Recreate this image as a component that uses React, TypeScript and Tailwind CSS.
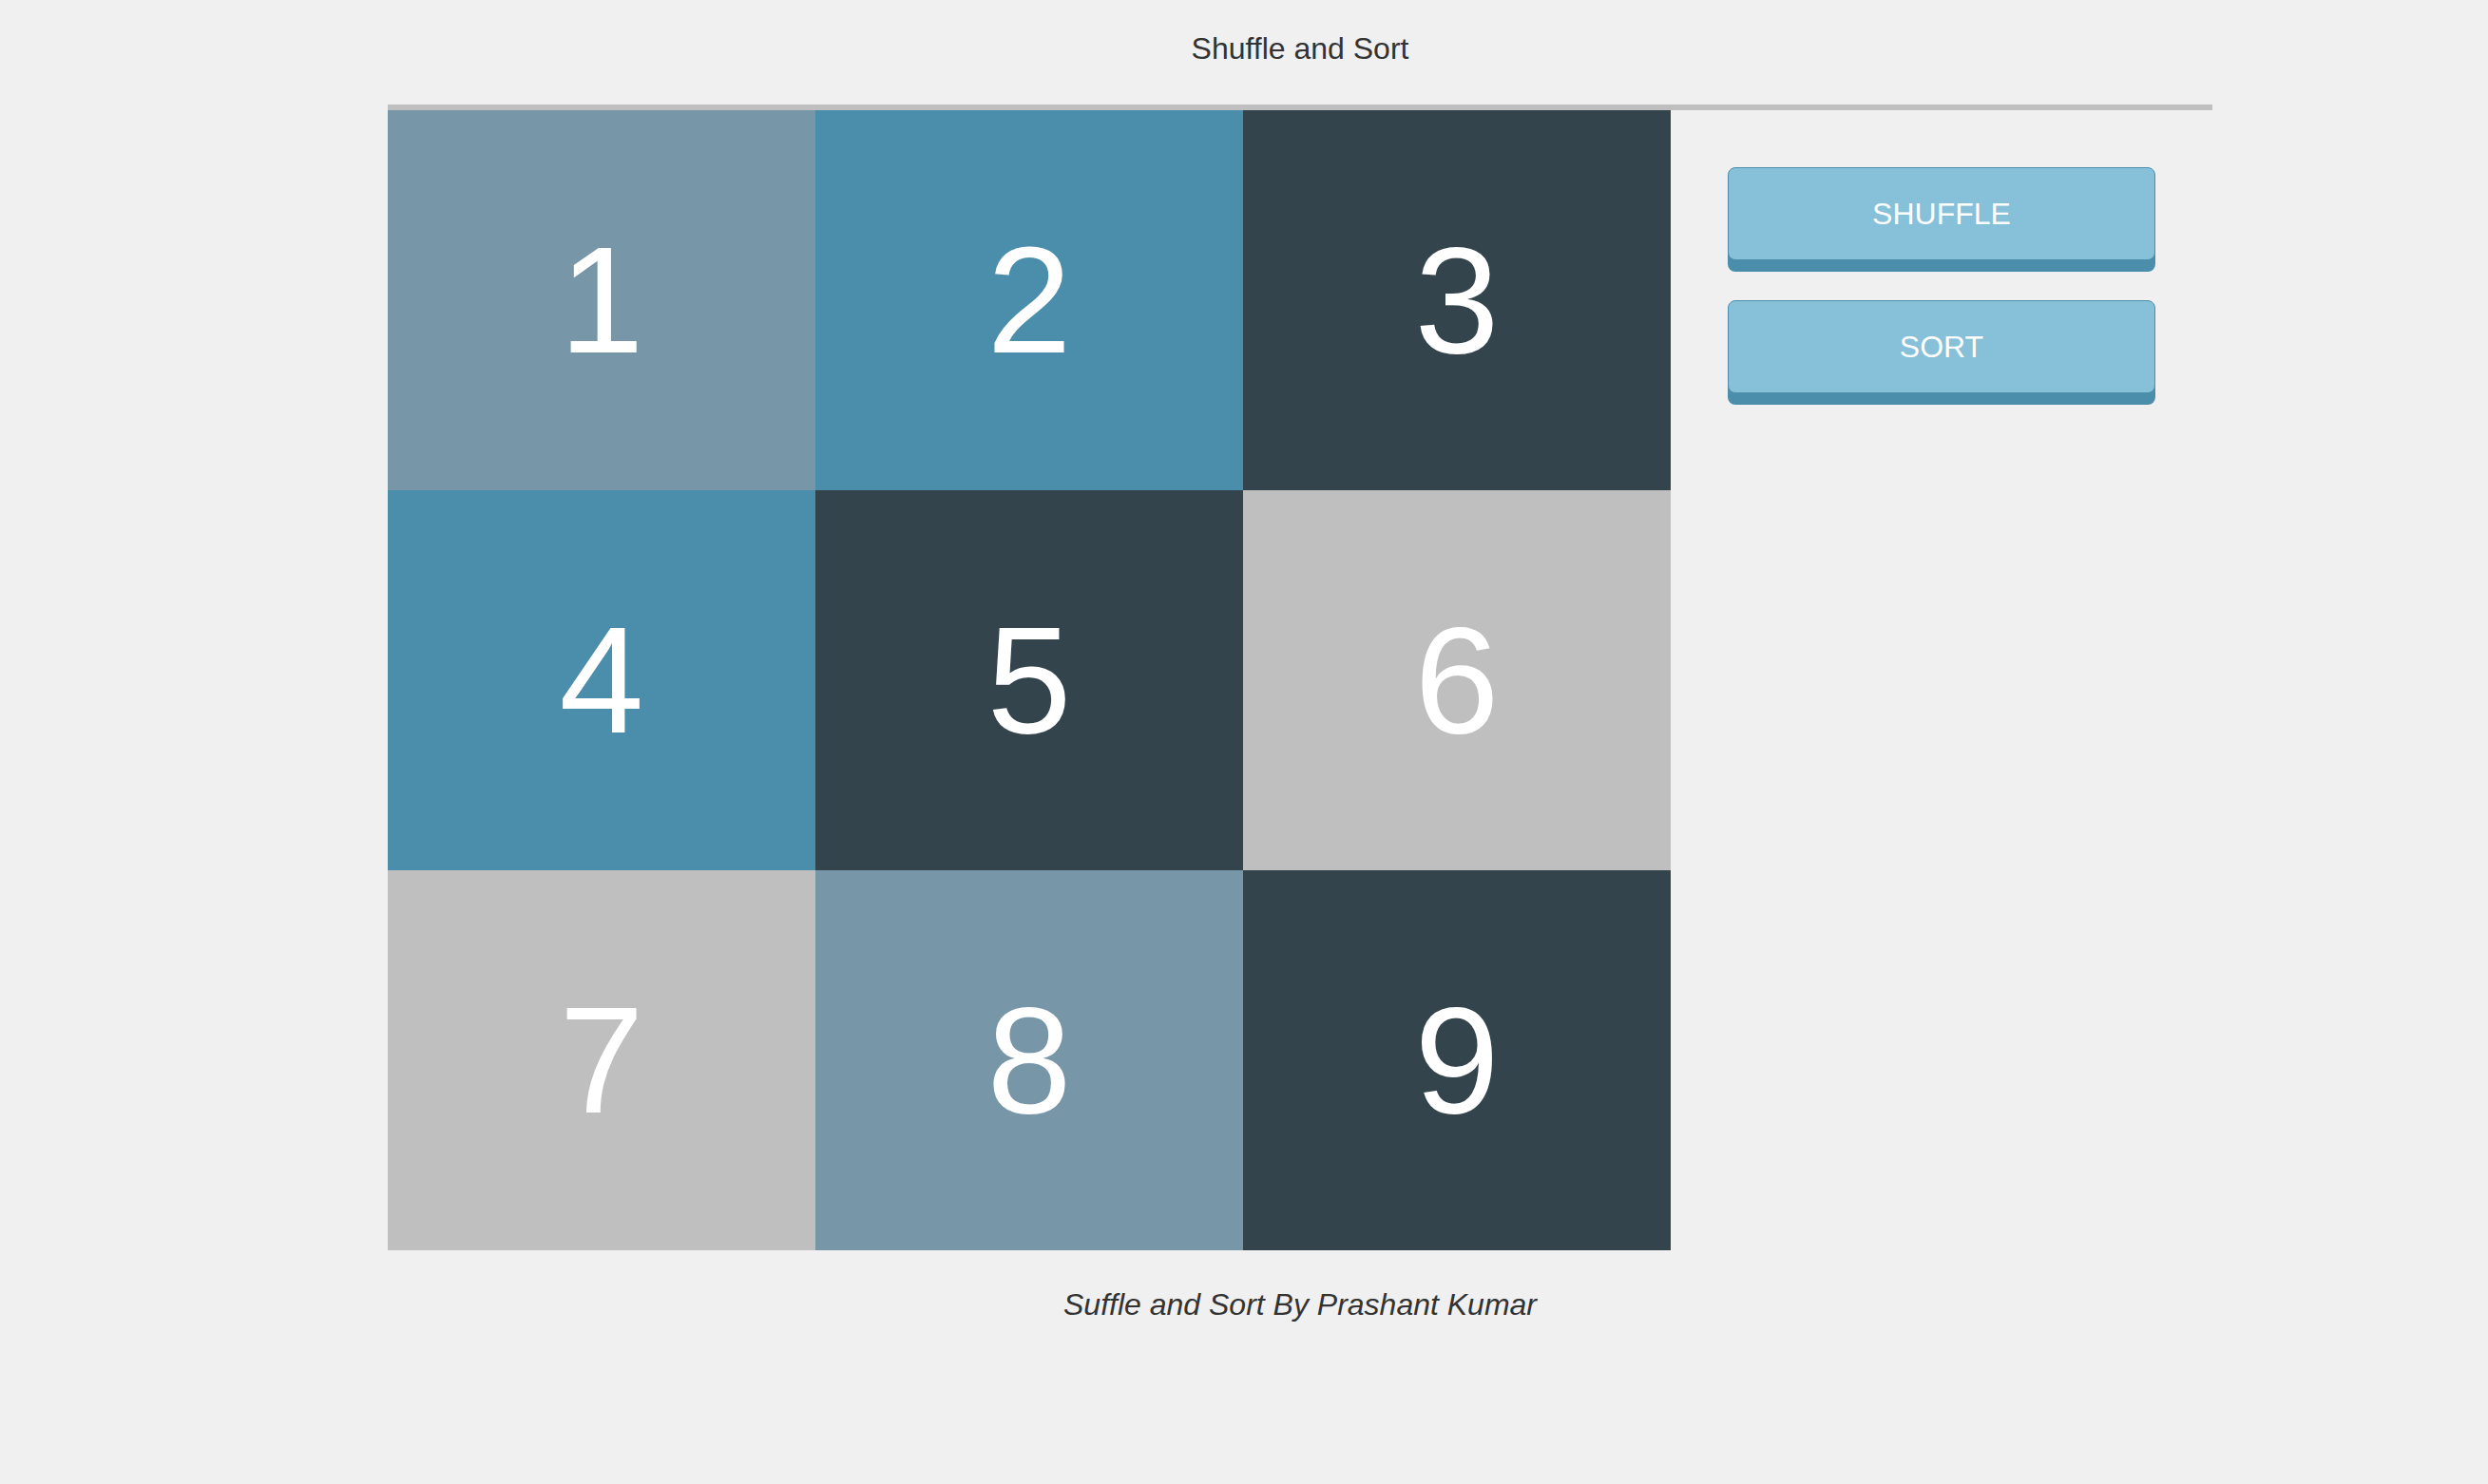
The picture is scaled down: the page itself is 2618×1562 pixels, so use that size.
import { useState } from 'react';

type Tile = { value: number; color: string };

const TILES: Tile[] = [
  { value: 1, color: 'bg-[#7797a8]' },
  { value: 2, color: 'bg-[#4a8eac]' },
  { value: 3, color: 'bg-[#33444d]' },
  { value: 4, color: 'bg-[#4a8eac]' },
  { value: 5, color: 'bg-[#33444d]' },
  { value: 6, color: 'bg-[#bfbfbf]' },
  { value: 7, color: 'bg-[#bfbfbf]' },
  { value: 8, color: 'bg-[#7797a8]' },
  { value: 9, color: 'bg-[#33444d]' },
];

export default function App() {
  const [tiles, setTiles] = useState<Tile[]>(TILES);

  const shuffle = () => {
    const next = [...tiles];
    for (let i = next.length - 1; i > 0; i--) {
      const j = Math.floor(Math.random() * (i + 1));
      [next[i], next[j]] = [next[j], next[i]];
    }
    setTiles(next);
  };

  const sort = () => {
    setTiles([...tiles].sort((a, b) => a.value - b.value));
  };

  return (
    <div
      className="min-h-screen w-full bg-[#f0f0f0] text-[#333333]"
      style={{ fontFamily: '"Liberation Sans", Arial, Helvetica, sans-serif' }}
    >
      <div className="ml-[408px] w-[1920px] pt-[35px]">
        {/* header */}
        <h1 className="text-center text-[32px] leading-[32px] font-normal">Shuffle and Sort</h1>
        <div className="mt-[43px] h-[6px] bg-[#bfbfbf]" />

        {/* board + actions */}
        <div className="flex">
          <div className="grid w-[1350px] grid-cols-3">
            {tiles.map((t) => (
              <div
                key={t.value}
                className={`flex h-[400px] items-center justify-center text-[160px] leading-none text-white ${t.color}`}
              >
                {t.value}
              </div>
            ))}
          </div>

          <div className="flex w-[570px] flex-col gap-[42px] px-[60px] pt-[60px]">
            <button
              className="h-[98px] w-[450px] rounded-[8px] border border-[#4a8eac] bg-[#86c0d9] text-[32px] text-white shadow-[0_12px_0_#4a8eac]"
              onClick={shuffle}
            >
              SHUFFLE
            </button>
            <button
              className="h-[98px] w-[450px] rounded-[8px] border border-[#4a8eac] bg-[#86c0d9] text-[32px] text-white shadow-[0_12px_0_#4a8eac]"
              onClick={sort}
            >
              SORT
            </button>
          </div>
        </div>

        {/* footer */}
        <p className="mt-[41px] text-center text-[32px] leading-[32px] italic">
          Suffle and Sort By Prashant Kumar
        </p>
      </div>
    </div>
  );
}
